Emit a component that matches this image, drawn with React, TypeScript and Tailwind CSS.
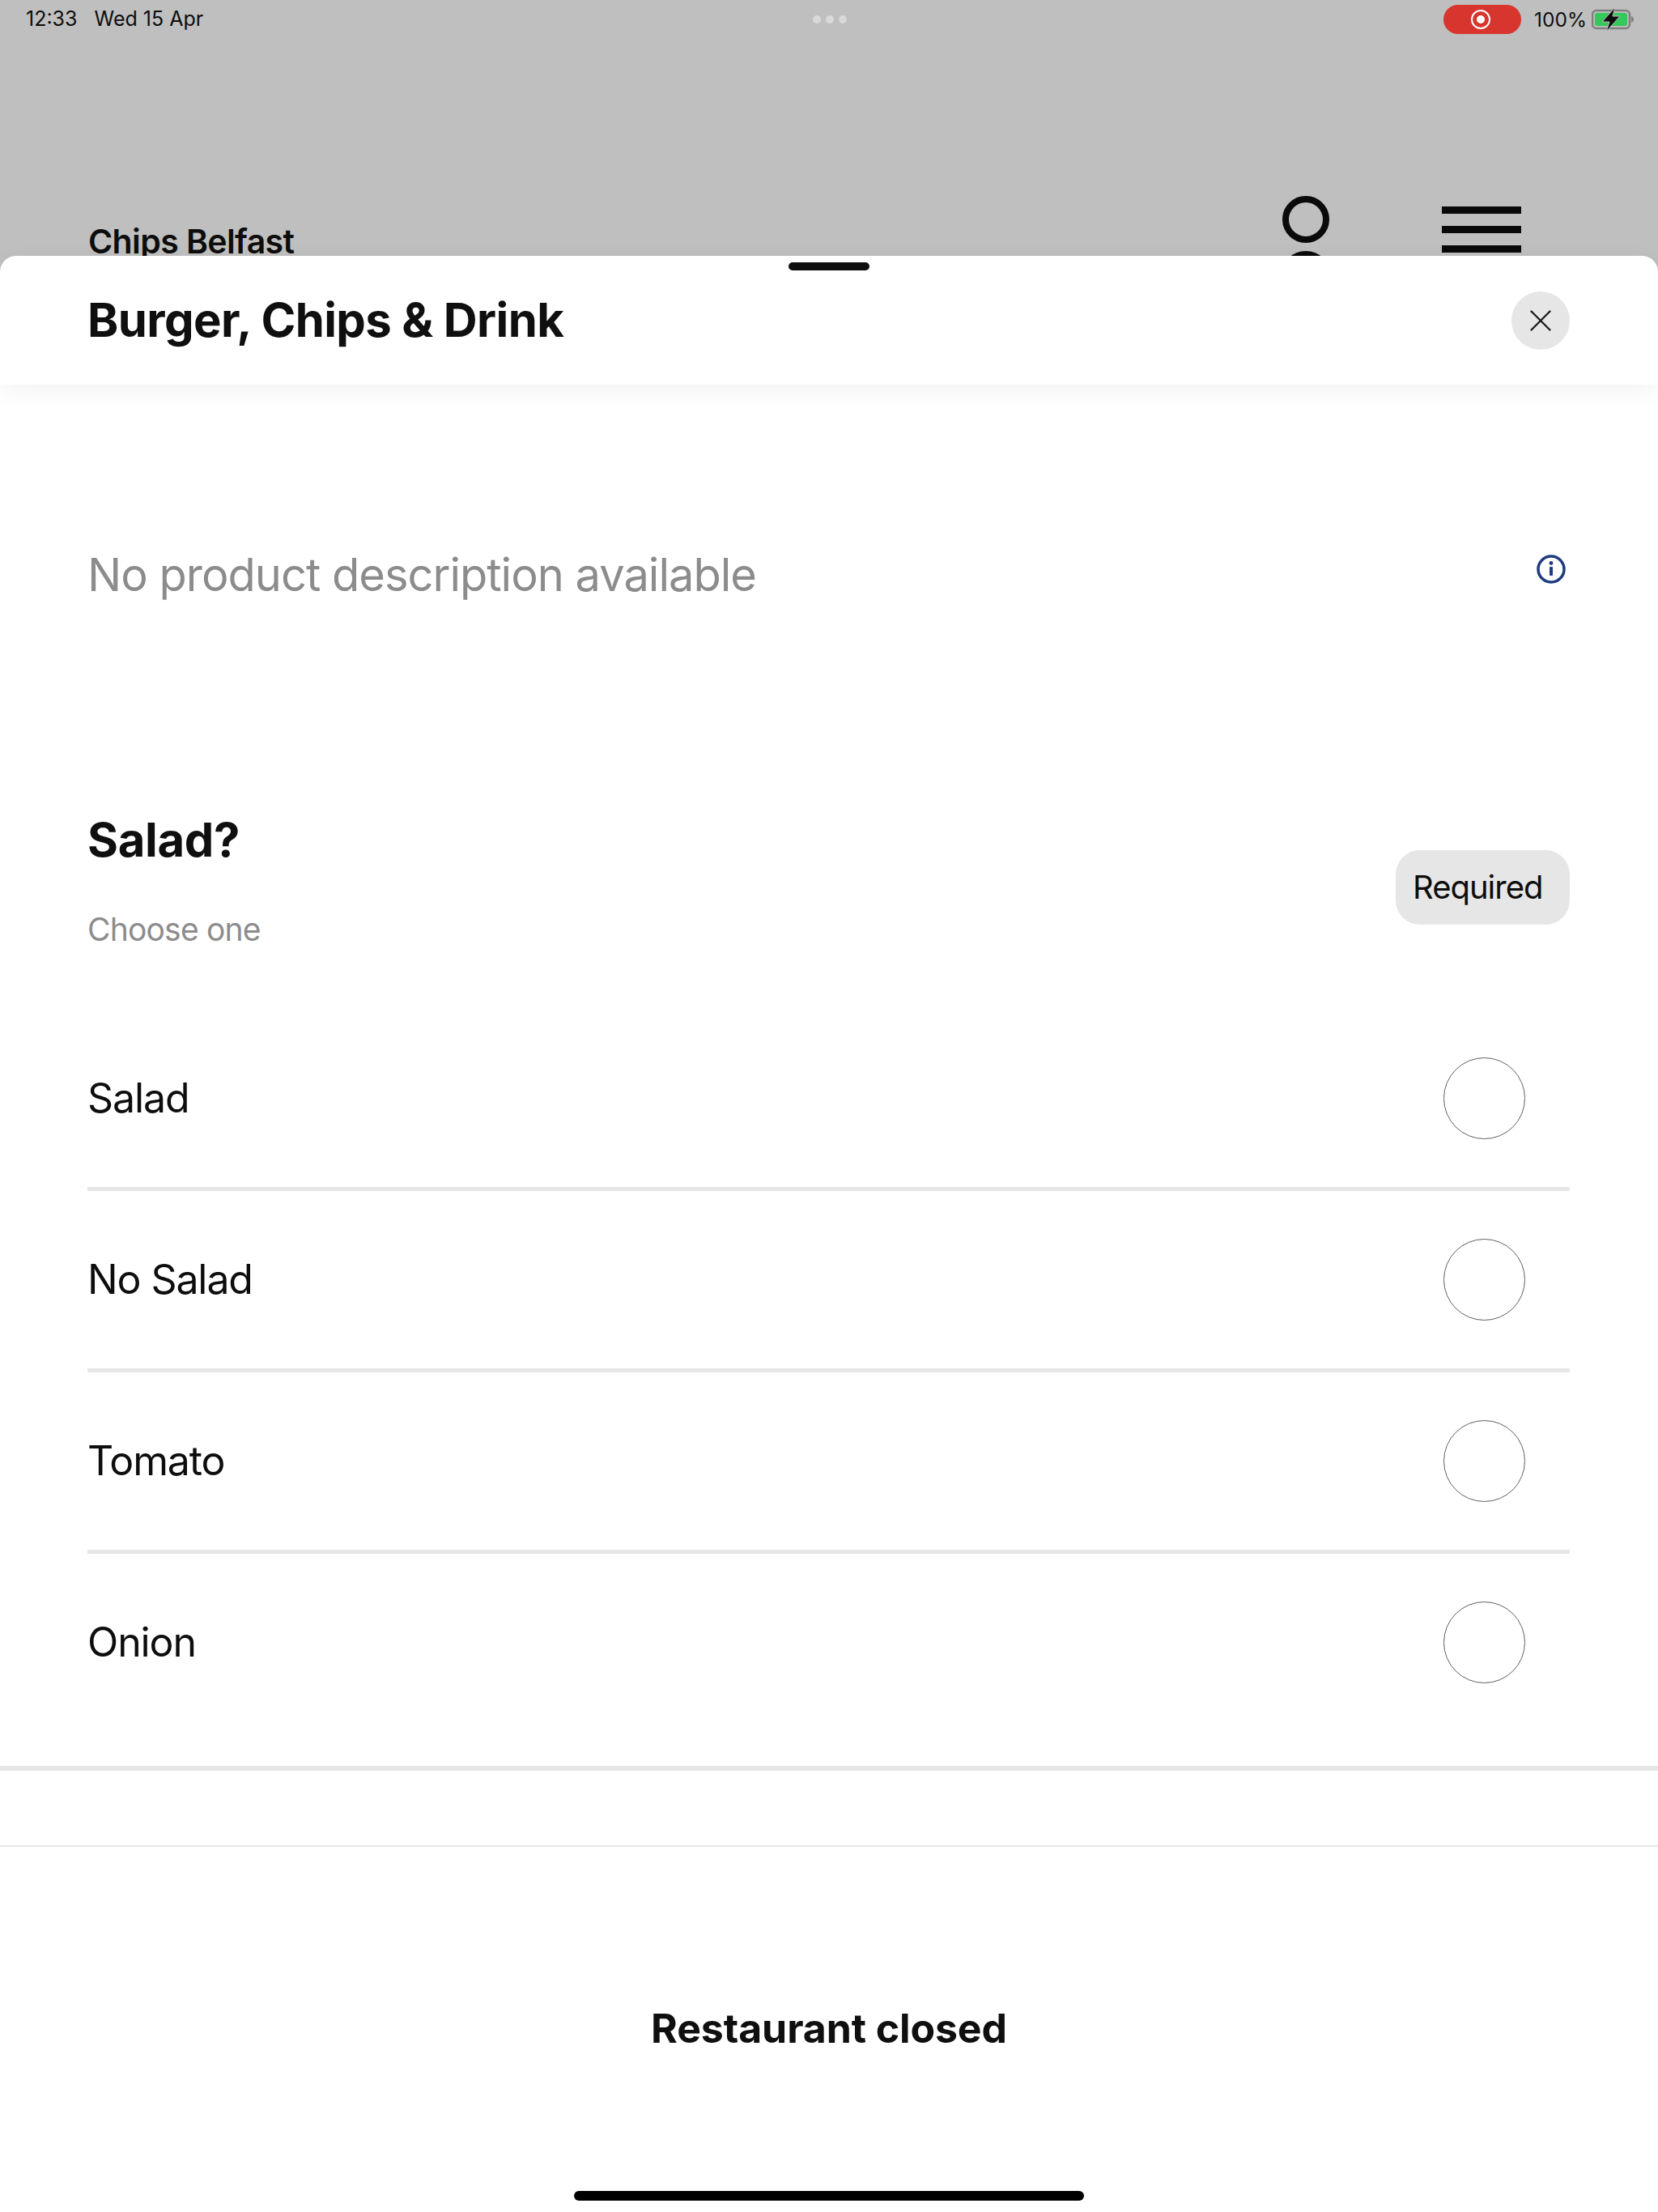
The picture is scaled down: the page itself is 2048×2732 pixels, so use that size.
import { X } from 'lucide-react';

const options = ['Salad', 'No Salad', 'Tomato', 'Onion'];

const font = { fontFamily: 'Inter, "Liberation Sans", sans-serif' };

function StatusBar() {
  return (
    <div className="flex h-12 items-center justify-between pl-8 pr-[30px] text-[25px] text-[#0d0d0d]">
      <div className="flex w-[400px] gap-[21px]">
        <span>12:33</span>
        <span>Wed 15 Apr</span>
      </div>
      <div className="flex gap-1.5">
        <span className="h-2.5 w-2.5 rounded-full bg-[#d9d9d9]" />
        <span className="h-2.5 w-2.5 rounded-full bg-[#d9d9d9]" />
        <span className="h-2.5 w-2.5 rounded-full bg-[#d9d9d9]" />
      </div>
      <div className="flex w-[400px] items-center justify-end">
        <div className="mr-4 flex h-9 w-24 items-center justify-center rounded-[18px] bg-[#d7352d]">
          <span className="-ml-1 flex h-6 w-6 items-center justify-center rounded-full border-2 border-white">
            <span className="h-2.5 w-2.5 rounded-full bg-white" />
          </span>
        </div>
        <span className="mr-1.5 text-[24.5px]">100%</span>
        <svg width="52" height="32" viewBox="0 0 52 32" className="shrink-0">
          <rect x="1" y="5" width="46" height="22" rx="5" fill="none" stroke="#7f7f7f" strokeWidth="2.5" />
          <rect x="4" y="8" width="40" height="16" rx="3" fill="#34c759" />
          <path d="M49 12c2 1 3 2 3 4s-1 3-3 4z" fill="#7f7f7f" />
          <path d="M29 1 13 19h9l-4 12 17-19h-9z" fill="#0d0d0d" stroke="#bfbfbf" strokeWidth="1" />
        </svg>
      </div>
    </div>
  );
}

function BackgroundHeader() {
  return (
    <div className="flex items-start justify-between pl-[109px] pr-[169px] pt-[194px]">
      <div className="pt-[31px] text-[41px] font-semibold leading-[50px] tracking-[-0.6px] text-[#0d0d0d]">
        Chips Belfast
      </div>
      <div className="flex items-start gap-[137px]">
        <div className="flex w-[62px] flex-col items-center">
          <span className="h-[58px] w-[58px] rounded-full border-[8px] border-[#0a0a0a]" />
          <span className="mt-2.5 h-[40px] w-[62px] rounded-t-full bg-[#0a0a0a]" />
        </div>
        <div className="flex w-[98px] flex-col gap-[15px] pt-[13px]">
          <span className="h-[9px] bg-[#0a0a0a]" />
          <span className="h-[9px] bg-[#0a0a0a]" />
          <span className="h-[9px] bg-[#0a0a0a]" />
        </div>
      </div>
    </div>
  );
}

function OptionRow({ label, last }: { label: string; last: boolean }) {
  return (
    <div className={`flex h-[224px] items-center justify-between border-b-[5px] pr-[55px] ${last ? 'border-transparent' : 'border-[#e6e6e6]'}`}>
      <span className="text-[50px] tracking-[-1.1px] text-[#0d0d0d]">{label}</span>
      <span className="h-[101px] w-[101px] rounded-full border-[1.5px] border-[#5f5f5f]" />
    </div>
  );
}

export default function App() {
  return (
    <div className="relative h-[2732px] w-[2048px] overflow-hidden bg-[#bfbfbf]" style={font}>
      <StatusBar />
      <BackgroundHeader />

      {/* Sheet */}
      <div className="absolute inset-x-0 bottom-0 top-[316px] flex flex-col rounded-t-[20px] bg-white">
        <div className="absolute left-1/2 top-2 h-2.5 w-[100px] -translate-x-1/2 rounded-full bg-[#0e0e0e]" />

        {/* Header */}
        <div className="flex h-[159px] shrink-0 items-center justify-between rounded-t-[20px] pl-[108px] pr-[109px] shadow-[0_8px_30px_rgba(0,0,0,0.05)]">
          <h1 className="text-[58px] font-bold tracking-[-0.6px] text-[#0f0f0f]">Burger, Chips &amp; Drink</h1>
          <button className="flex h-[72px] w-[72px] items-center justify-center rounded-full bg-[#e6e6e6]">
            <X className="h-[46px] w-[46px] text-[#1a1a1a]" strokeWidth={1.2} />
          </button>
        </div>

        {/* Description */}
        <div className="flex h-[527px] shrink-0 items-start justify-between pl-[108px] pr-[114px] pt-[194px]">
          <span className="text-[56px] leading-[82px] tracking-[-1px] text-[#8c8c8c]">No product description available</span>
          <svg width="36" height="36" viewBox="0 0 36 36" className="mt-[16px]">
            <circle cx="18" cy="18" r="16" fill="none" stroke="#1f3c80" strokeWidth="3.5" />
            <circle cx="18" cy="10.5" r="2.4" fill="#1f3c80" />
            <rect x="16" y="15" width="4" height="11" rx="1" fill="#1f3c80" />
          </svg>
        </div>

        {/* Options */}
        <div className="shrink-0 pl-[108px] pr-[109px]">
          <div className="flex items-center justify-between">
            <div>
              <h2 className="text-[58px] font-bold leading-[70px] tracking-[-0.3px] text-[#0f0f0f]">Salad?</h2>
              <p className="mt-[52px] text-[39px] leading-[48px] tracking-[-0.8px] text-[#8c8c8c]">Choose one</p>
            </div>
            <span className="mt-[18px] flex h-[92px] w-[215px] items-center rounded-[30px] bg-[#e6e6e6] pl-[21px] text-[40px] tracking-[-1px] text-[#0d0d0d]">
              Required
            </span>
          </div>
          <div className="mt-[75px]">
            {options.map((label, i) => (
              <OptionRow key={label} label={label} last={i === options.length - 1} />
            ))}
          </div>
        </div>

        <div className="mt-[38px] h-[6px] shrink-0 bg-[#e6e6e6]" />
        <div className="mt-[92px] h-[2px] shrink-0 bg-[#e6e6e6]" />

        {/* Footer */}
        <div className="flex h-[448px] items-center justify-center">
          <span className="text-[50px] font-bold tracking-[-0.1px] text-[#0f0f0f]">Restaurant closed</span>
        </div>
      </div>

      <div className="absolute bottom-[14px] left-1/2 h-3 w-[630px] -translate-x-1/2 rounded-full bg-black" />
    </div>
  );
}
